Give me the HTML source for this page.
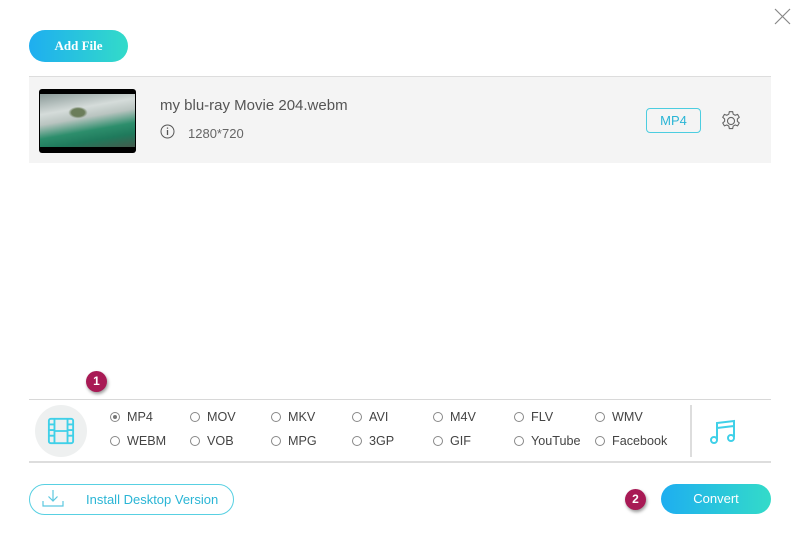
<!DOCTYPE html>
<html><head><meta charset="utf-8"><style>
*{margin:0;padding:0;box-sizing:border-box}
body{width:800px;height:537px;background:#fff;position:relative;overflow:hidden;font-family:"Liberation Sans",sans-serif}
.abs{position:absolute}
.grad{background:linear-gradient(90deg,#1eaef0,#33dbc9);color:#fff}
.radio{position:absolute;font-size:12.6px;color:#444;display:flex;align-items:center}
.radio i{display:inline-block;width:10px;height:10px;border:1px solid #888;border-radius:50%;margin-right:7px;position:relative;background:#fff}
.radio i.on::after{content:"";position:absolute;left:2px;top:2px;width:4px;height:4px;border-radius:50%;background:#777}
.badge{position:absolute;width:21px;height:21px;border-radius:50%;background:#a81a55;color:#fff;font-size:12px;font-weight:bold;text-align:center;line-height:21px;box-shadow:1px 2px 3px rgba(0,0,0,.4)}
</style></head><body>
<svg class="abs" style="left:774px;top:8px" width="17" height="17"><path d="M1 1L16 16M16 1L1 16" stroke="#888" stroke-width="1.2"/></svg>
<div class="abs grad" style="left:29px;top:30px;width:99px;height:32px;border-radius:16px;font-family:'Liberation Serif',serif;font-weight:bold;font-size:13px;text-align:center;line-height:32px">Add File</div>
<div class="abs" style="left:29px;top:76px;width:742px;height:87px;background:#f4f4f4;border-top:1px solid #ddd"></div>
<div class="abs" style="left:39px;top:89px;width:97px;height:64px;background:#000;border-radius:3px;overflow:hidden">
<div style="position:absolute;left:1px;top:5px;width:95px;height:53px;background:radial-gradient(ellipse at 40% 35%,#6b7d5a 0 8%,transparent 12%),linear-gradient(170deg,#8a9a98 0%,#d5dcda 30%,#b9c4c0 45%,#2d8e6c 65%,#1f7a5c 80%,#445a4c 100%)"></div></div>
<div class="abs" style="left:160px;top:97px;font-size:15px;color:#555">my blu-ray Movie 204.webm</div>
<svg class="abs" style="left:160px;top:124px" width="15" height="15"><circle cx="7.5" cy="7.5" r="6.5" fill="none" stroke="#555" stroke-width="1"/><path d="M7.5 6v5M7.5 3.5v1.3" stroke="#555" stroke-width="1.3"/></svg>
<div class="abs" style="left:188px;top:126px;font-size:13px;color:#666">1280*720</div>
<div class="abs" style="left:646px;top:108px;width:55px;height:25px;border:1px solid #4ccde0;border-radius:4px;color:#2ab5d5;font-size:13px;text-align:center;line-height:23px">MP4</div>
<svg class="abs" style="left:720px;top:110px" width="22" height="22" viewBox="0 0 20 20"><path d="M8.5 1.5h3l.5 2.3 1.8 1 2.2-.8 1.5 2.6-1.7 1.6v2l1.7 1.6-1.5 2.6-2.2-.8-1.8 1-.5 2.3h-3l-.5-2.3-1.8-1-2.2.8-1.5-2.6 1.7-1.6v-2L2.5 6.6 4 4l2.2.8 1.8-1z" fill="none" stroke="#666" stroke-width="1"/><circle cx="10" cy="10" r="3.2" fill="none" stroke="#666" stroke-width="1"/></svg>
<div class="badge" style="left:86px;top:371px">1</div>
<div class="abs" style="left:29px;top:399px;width:742px;height:1px;background:#d8d8d8"></div>
<div class="abs" style="left:29px;top:461px;width:742px;height:2px;background:#ddd"></div>
<div class="abs" style="left:35px;top:405px;width:52px;height:52px;border-radius:50%;background:#eef0f0"></div>
<svg class="abs" style="left:47px;top:417px" width="28" height="28" viewBox="0 0 30 30"><rect x="2" y="2" width="26" height="26" rx="2" fill="none" stroke="#3fd0e8" stroke-width="2"/><path d="M8 2v26M22 2v26M2 8h6M2 14h6M2 20h6M22 8h6M22 14h6M22 20h6M8 15h14" stroke="#3fd0e8" stroke-width="2"/></svg>
<div class="radio" style="left:110px;top:410px"><i class="on"></i>MP4</div>
<div class="radio" style="left:190px;top:410px"><i></i>MOV</div>
<div class="radio" style="left:271px;top:410px"><i></i>MKV</div>
<div class="radio" style="left:352px;top:410px"><i></i>AVI</div>
<div class="radio" style="left:433px;top:410px"><i></i>M4V</div>
<div class="radio" style="left:514px;top:410px"><i></i>FLV</div>
<div class="radio" style="left:595px;top:410px"><i></i>WMV</div>
<div class="radio" style="left:110px;top:434px"><i></i>WEBM</div>
<div class="radio" style="left:190px;top:434px"><i></i>VOB</div>
<div class="radio" style="left:271px;top:434px"><i></i>MPG</div>
<div class="radio" style="left:352px;top:434px"><i></i>3GP</div>
<div class="radio" style="left:433px;top:434px"><i></i>GIF</div>
<div class="radio" style="left:514px;top:434px"><i></i>YouTube</div>
<div class="radio" style="left:595px;top:434px"><i></i>Facebook</div>
<div class="abs" style="left:690px;top:405px;width:2px;height:52px;background:#ddd"></div>
<svg class="abs" style="left:709px;top:417px" width="28" height="28" viewBox="0 0 28 28"><path d="M8 23V6l17-2v16M8 11l17-2" fill="none" stroke="#3fd0e8" stroke-width="2"/><circle cx="5" cy="23" r="3" fill="none" stroke="#3fd0e8" stroke-width="2"/><circle cx="22" cy="21" r="3" fill="none" stroke="#3fd0e8" stroke-width="2"/></svg>
<div class="abs" style="left:29px;top:484px;width:205px;height:31px;border:1px solid #58d0e2;border-radius:16px"></div>
<svg class="abs" style="left:42px;top:489px" width="22" height="19" viewBox="0 0 22 19"><path d="M11 1v11M6.5 7.5L11 12l4.5-4.5M1 12v5h20v-5" fill="none" stroke="#5cc8e0" stroke-width="1.2"/></svg>
<div class="abs" style="left:86px;top:492px;font-size:13px;color:#2ab5d5">Install Desktop Version</div>
<div class="badge" style="left:625px;top:489px">2</div>
<div class="abs grad" style="left:661px;top:484px;width:110px;height:30px;border-radius:15px;font-size:13px;text-align:center;line-height:30px">Convert</div>
</body></html>
